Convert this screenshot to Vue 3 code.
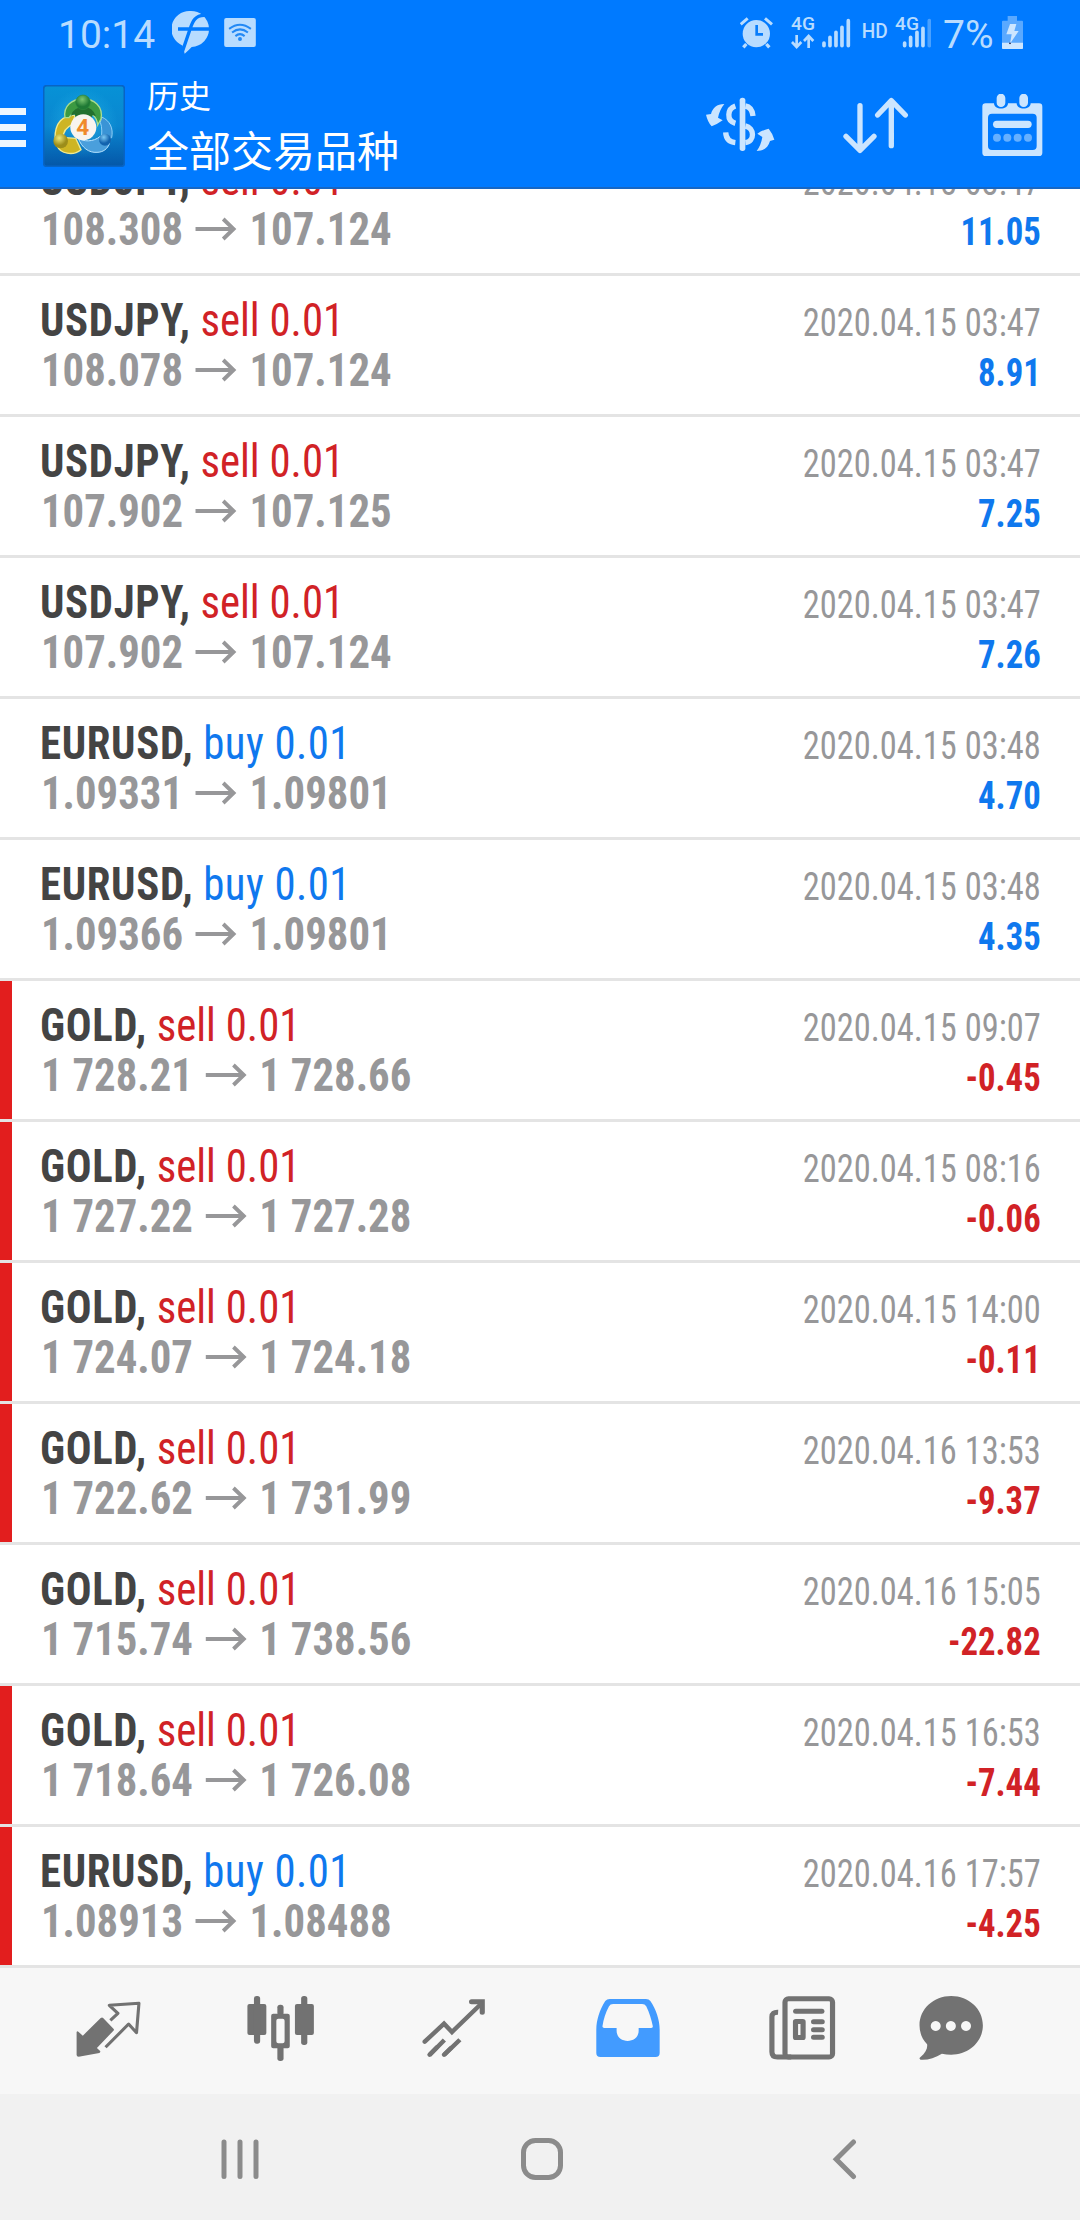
<script setup>
const rows = [
  ['USDJPY', 'sell', '108.308', '107.124', '2020.04.15 03:47', '11.05', false],
  ['USDJPY', 'sell', '108.078', '107.124', '2020.04.15 03:47', '8.91', false],
  ['USDJPY', 'sell', '107.902', '107.125', '2020.04.15 03:47', '7.25', false],
  ['USDJPY', 'sell', '107.902', '107.124', '2020.04.15 03:47', '7.26', false],
  ['EURUSD', 'buy', '1.09331', '1.09801', '2020.04.15 03:48', '4.70', false],
  ['EURUSD', 'buy', '1.09366', '1.09801', '2020.04.15 03:48', '4.35', false],
  ['GOLD', 'sell', '1 728.21', '1 728.66', '2020.04.15 09:07', '-0.45', true],
  ['GOLD', 'sell', '1 727.22', '1 727.28', '2020.04.15 08:16', '-0.06', true],
  ['GOLD', 'sell', '1 724.07', '1 724.18', '2020.04.15 14:00', '-0.11', true],
  ['GOLD', 'sell', '1 722.62', '1 731.99', '2020.04.16 13:53', '-9.37', true],
  ['GOLD', 'sell', '1 715.74', '1 738.56', '2020.04.16 15:05', '-22.82', false],
  ['GOLD', 'sell', '1 718.64', '1 726.08', '2020.04.15 16:53', '-7.44', true],
  ['EURUSD', 'buy', '1.08913', '1.08488', '2020.04.16 17:57', '-4.25', true],
].map(([symbol, side, open, close, time, profit, stopped]) => ({ symbol, side, open, close, time, profit, stopped }))
</script>

<template>
  <div class="screen">
    <header class="header">
      <div class="status">
        <span class="clock">10:14</span>
        <svg class="s-f" viewBox="515 30 111 132" width="37" height="44">
          <path fill="#b8dcff" d="M570 33a54 54 0 0 1 4 108q-9 10-21 20l-6-24A54 54 0 0 1 570 33z" />
          <path d="M620 47C584 42 576 66 569 88L545 158M533 87h93" fill="none" stroke="#007aff" stroke-width="10" />
        </svg>
        <svg class="s-wifi" viewBox="672 53 96 88" width="32" height="29">
          <rect x="672" y="53" width="96" height="88" rx="6" fill="#b8dcff" />
          <g fill="none" stroke="#2389f5" stroke-width="6">
            <path d="M687 86q33-25 66 0M696 97q24-19 48 0M706 108q14-12 28 0" />
          </g>
          <circle cx="720" cy="117" r="6" fill="#2389f5" />
        </svg>
        <span class="fill" />
        <svg class="s-icons" viewBox="149 45 574 105" width="191.3" height="35">
          <g fill="none" stroke="#b8dcff" stroke-width="9">
            <path d="M151 73l21-18M245 73l-21-18" />
            <path d="M168 132l-9 10M228 132l9 10" stroke-width="10" />
          </g>
          <circle cx="198" cy="101" r="41" fill="#b8dcff" />
          <path d="M199 75v28h19" fill="none" stroke="#0a7dfa" stroke-width="8" />
          <g class="net">
            <text x="302" y="90" font-size="54" textLength="72" lengthAdjust="spacingAndGlyphs">4G</text>
            <text x="514" y="115" font-size="58" textLength="78" lengthAdjust="spacingAndGlyphs">HD</text>
            <text x="614" y="90" font-size="54" textLength="72" lengthAdjust="spacingAndGlyphs">4G</text>
          </g>
          <path d="M319 105v36M305 126l14 15 14-15M355 144v-36M341 123l14-15 14 15" fill="none" stroke="#b8dcff" stroke-width="8" />
          <g fill="none" stroke="#b8dcff" stroke-width="11" stroke-linecap="round">
            <path d="M401 129v8M419 112v25M437 97v40M455 82v55M474 62v75" />
            <path d="M643 129v8M661 112v25M680 97v40M698 85v52" />
            <path d="M717 62v75" opacity=".4" />
          </g>
        </svg>
        <span class="pct">7%</span>
        <svg class="s-batt" viewBox="936 48 63 99" width="21" height="33">
          <path d="M953 48h28v14h15q3 0 3 3v79q0 3-3 3h-57q-3 0-3-3V65q0-3 3-3h14z" fill="#5aa9ff" />
          <path d="M936 128h63v16q0 3-3 3h-57q-3 0-3-3z" fill="#cde6ff" />
          <path d="M960 72h19l-6 21h13l-26 38 5-28h-16z" fill="#cde6ff" />
          <circle cx="960" cy="130" r="2.5" fill="#003" />
        </svg>
      </div>
      <div class="toolbar">
        <div class="menu"><i /><i /><i /></div>
        <svg class="logo" viewBox="130 254 246 246" width="82" height="82">
          <defs>
            <linearGradient id="bg" x1="0" y1="0" x2="0" y2="1">
              <stop offset="0" stop-color="#0792d6" /><stop offset=".5" stop-color="#0a86d0" /><stop offset="1" stop-color="#0457a8" />
            </linearGradient>
            <radialGradient id="glow"><stop offset="0" stop-color="#2fc4ef" /><stop offset="1" stop-color="#2fc4ef" stop-opacity="0" /></radialGradient>
            <radialGradient id="gr" cx=".45" cy=".3"><stop offset="0" stop-color="#7cc771" /><stop offset="1" stop-color="#1f7a35" /></radialGradient>
            <radialGradient id="ye" cx=".4" cy=".3"><stop offset="0" stop-color="#efe878" /><stop offset="1" stop-color="#9c8d1a" /></radialGradient>
            <radialGradient id="bl" cx=".4" cy=".3"><stop offset="0" stop-color="#7cc9f4" /><stop offset="1" stop-color="#1263ae" /></radialGradient>
          </defs>
          <rect x="132" y="256" width="242" height="242" rx="9" fill="url(#bg)" stroke="#0864c4" stroke-width="5" />
          <circle cx="250" cy="370" r="105" fill="url(#glow)" opacity=".55" />
          <path d="M306 350c24 10 36 34 30 62l-32 10c3-20 4-42-2-56z" fill="#3a94d6" stroke="#8fd0f8" stroke-width="3" />
          <path d="M236 414c16 10 44 12 66-6l28 20c-6 18-20 28-38 28-24 2-46-14-56-42z" fill="#4a9fdc" stroke="#b9e4ff" stroke-width="3" />
          <path d="M226 345c-36-2-61 22-60 70l24 0c0-22 8-34 28-42zM172 436c10 24 48 32 72 12l-16-34-30-2z" fill="#cdb524" stroke="#f2ea8e" stroke-width="4" />
          <path d="M196 352c-6-34 20-56 54-56s61 22 54 60l-10 18c-2-22-14-38-44-38s-36 6-42 16z" fill="#3c9a42" stroke="#a9dc90" stroke-width="4" />
          <path d="M213 346q10-26 38-26t38 28l-10-4-10 22h-36l-8-24z" fill="#23702f" />
          <circle cx="250" cy="306" r="22" fill="url(#gr)" stroke="#2e8a3e" stroke-width="2" />
          <circle cx="183" cy="422" r="22" fill="url(#ye)" />
          <circle cx="316" cy="418" r="18" fill="url(#bl)" />
          <circle cx="251" cy="381" r="39" fill="#f8f4ef" />
          <text x="249" y="404" text-anchor="middle" font-size="68" class="four">4</text>
        </svg>
        <div class="titles">
          <div class="t1">历史</div>
          <div class="t2">全部交易品种</div>
        </div>
        <svg class="a1" viewBox="48 282 206 186" width="68.7" height="62">
          <g fill="#cbe5ff">
            <rect x="149" y="293" width="17" height="160" rx="8" />
            <path d="M103 312C80 312 68 324 63 342L48 344q5 22 17 35 18-7 33-18l-14-8q5-24 19-41z" />
            <path d="M200 453c23 0 35-12 40-30l13-4q-6-20-17-33-18 4-34 15l15 10q-4 25-17 42z" />
          </g>
          <g fill="none" stroke="#cbe5ff" stroke-width="16">
            <path d="M136 318c-24 8-28 44 0 52M166 318c12 2 21 12 23 30M107 397c1 18 12 29 29 31M166 378c28 5 29 47 0 50" />
          </g>
        </svg>
        <svg class="a2" viewBox="460 282 196 186" width="65.3" height="62">
          <path d="M511 317v134M469 409l42 42 42-42M605 437V302M564 345l41-43 42 43" fill="none" stroke="#cbe5ff" stroke-width="16" stroke-linecap="round" stroke-linejoin="round" />
        </svg>
        <svg class="a3" viewBox="875 282 183 186" width="61" height="62">
          <path fill="#cbe5ff" fill-rule="evenodd" d="M886 310h25c0 21 42 21 42 0h26c0 21 42 21 42 0h25q10 0 10 10v138q0 10-10 10H886q-10 0-10-10V320q0-10 10-10zM905 341q-12 0-12 12v85q0 12 12 12h122q12 0 12-12v-85q0-12-12-12z" />
          <path d="M932 294v14M1000 294v14" stroke="#cbe5ff" stroke-width="26" stroke-linecap="round" />
          <path d="M919 373h94" stroke="#cbe5ff" stroke-width="22" stroke-linecap="round" />
          <g fill="#66b0ff"><circle cx="920" cy="413" r="12" /><circle cx="951" cy="413" r="12" /><circle cx="982" cy="413" r="12" /><circle cx="1013" cy="413" r="12" /></g>
        </svg>
      </div>
    </header>

    <main class="list">
      <div v-for="(r, i) in rows" :key="i" class="row" :class="{ stopped: r.stopped }">
        <div class="left">
          <div class="line"><b>{{ r.symbol }},</b> <span :class="[r.side, 'deal']">{{ r.side }} 0.01</span></div>
          <div class="line prices">
            <span>{{ r.open }}</span>
            <svg viewBox="0 0 44.8 24" width="44.8" height="24"><path d="M0 12h41M30 2l11 10-11 10" fill="none" stroke="#979799" stroke-width="4.2" /></svg>
            <span>{{ r.close }}</span>
          </div>
        </div>
        <div class="right">
          <div class="date">{{ r.time }}</div>
          <div class="profit" :class="r.profit[0] === '-' ? 'sell' : 'buy'">{{ r.profit }}</div>
        </div>
      </div>
    </main>

    <nav class="tabs">
      <div class="tab">
        <svg viewBox="196 93 232.3 240" preserveAspectRatio="none">
          <path d="M291 174q4-3 7 0l30 32q3 3 0 6l-48 52 10 10q0 4-3 5l-60 11q-6 0-6-5v-69q2-4 5-1l13 12z" fill="#727272" />
          <path d="M319 181l22-21-25-24 86-6-7 88-23-26-67 70" fill="none" stroke="#727272" stroke-width="9" stroke-linejoin="round" />
        </svg>
      </div>
      <div class="tab">
        <svg viewBox="698.4 93 232.3 240" preserveAspectRatio="none">
          <g fill="#727272">
            <rect x="717" y="132" width="55" height="93" rx="6" /><rect x="855" y="132" width="55" height="93" rx="6" />
            <rect x="736" y="108" width="18" height="143" rx="8" /><rect x="873" y="108" width="18" height="147" rx="8" />
            <rect x="804" y="134" width="18" height="32" rx="8" /><rect x="804" y="258" width="18" height="45" rx="8" />
            <path fill-rule="evenodd" d="M792 161h42q6 0 6 6v92q0 6-6 6h-42q-6 0-6-6v-92q0-6 6-6zM807 176q-6 0-6 6v62q0 6 6 6h12q6 0 6-6v-62q0-6-6-6z" />
          </g>
        </svg>
      </div>
      <div class="tab">
        <svg viewBox="1200.8 93 232.3 240" preserveAspectRatio="none">
          <g fill="none" stroke="#727272" stroke-linecap="round">
            <path d="M1232 245l56-54 23 25 82-82" stroke-width="13" />
            <path d="M1246 285l43-45M1288 285l46-46" stroke-width="13" stroke-linecap="butt" />
            <path d="M1246 284l20-21M1288 284l20-20" stroke-width="13" />
            <path d="M1368 125h31v32" stroke-width="15" /><path d="M1380 125h19v24z" fill="#727272" stroke="none" />
          </g>
        </svg>
      </div>
      <div class="tab">
        <svg viewBox="135 93 232.3 240" preserveAspectRatio="none">
          <path fill="#429bff" fill-rule="evenodd" d="M201 117h105q9 0 13 6c17 26 27 57 27 86v70q0 12-12 12H174q-12 0-12-12v-70c0-29 10-60 26-86q5-6 13-6zM211 132q-9 0-12 7c-10 19-16 39-19 59q-1 6 5 6h36v8c0 41 64 41 64 0v-8h35q7 0 6-6c-4-20-10-40-19-59q-4-7-12-7z" />
        </svg>
      </div>
      <div class="tab">
        <svg viewBox="637.4 93 232.3 240" preserveAspectRatio="none">
          <g fill="none" stroke="#727272" stroke-width="15">
            <rect x="710" y="116" width="138" height="175" rx="10" />
            <path d="M690 157q-18-1-18 14v104q0 16 16 16h40" />
            <path d="M741 154h76" stroke-linecap="round" />
            <path d="M793 185h25M793 209h25M793 232h25" stroke-linecap="round" />
            <rect x="740.5" y="184.5" width="22" height="48" rx="1" />
          </g>
        </svg>
      </div>
      <div class="tab last">
        <svg viewBox="1077.3 93 232.3 240" preserveAspectRatio="none">
          <path fill="#727272" fill-rule="evenodd" d="M1194 108c51 0 92 39 92 88s-41 88-92 88q-14 0-27-3c-20 12-42 20-62 18q-6-3 0-8c15-12 21-26 19-38-14-15-22-35-22-57 0-49 41-88 92-88zM1149 183a14.5 15 0 1 0 .1 0zM1193 183a14.5 15 0 1 0 .1 0zM1237 183a14.5 15 0 1 0 .1 0z" />
        </svg>
      </div>
    </nav>

    <footer class="sys">
      <svg viewBox="0 0 40 42" width="40" height="42"><path d="M4 4v34.500M20 4v34.500M36 4v34.500" stroke="#8b8b8b" stroke-width="5" stroke-linecap="round" /></svg>
      <svg viewBox="0 0 42 42" width="42" height="42"><rect x="2.5" y="2.5" width="37" height="37" rx="12" fill="none" stroke="#8b8b8b" stroke-width="5" /></svg>
      <svg viewBox="0 0 42 42" width="42" height="42"><path d="M29.500 4L12.200 21.200l17.300 17.300" fill="none" stroke="#8b8b8b" stroke-width="5" stroke-linecap="round" /></svg>
    </footer>
  </div>
</template>

<style>
body { margin: 0; background: #fff; }
</style>

<style scoped>
.screen { width: 1080px; height: 2220px; display: flex; flex-direction: column; overflow: hidden; background: #fff; font-family: "Roboto Condensed", Roboto, sans-serif; }
svg { display: block; flex: none; }
.header { box-sizing: border-box; height: 189px; flex: none; background: #007aff; border-bottom: 2px solid #1767c4; font-family: Roboto, sans-serif; }
.status { height: 64px; display: flex; align-items: center; color: #b8dcff; padding: 0 57px 0 58px; }
.clock { width: 96px; font-size: 39px; white-space: nowrap; margin-top: 5px; }
.s-f { margin-left: 17.5px; }
.s-wifi { margin-left: 15.5px; }
.fill { flex: 1; }
.net text { font-family: Roboto, sans-serif; font-weight: 500; fill: #b8dcff; }
.pct { width: 59px; margin: 5px 0 0 12px; font-size: 39px; white-space: nowrap; }
.s-batt { margin-top: 1px; }
.toolbar { height: 123px; display: flex; align-items: flex-start; }
.menu { width: 26px; display: flex; flex-direction: column; gap: 9px; margin-top: 44px; }
.menu i { height: 7px; background: #ecf6ff; }
.logo { margin: 21px 22px 0 17px; }
.four { font-family: Roboto, sans-serif; font-weight: 700; fill: #f08a2c; }
.titles { flex: 1; color: #fff; font-family: "Noto Sans CJK SC", sans-serif; }
.t1 { font-size: 32px; line-height: 48px; margin-top: 6px; }
.t2 { font-size: 42px; line-height: 60px; margin-top: 1px; }
.a1, .a2, .a3 { margin-top: 30px; }
.a2 { margin-left: 68.6px; }
.a3 { margin: 30px 37.3px 0 73px; }
.list { flex: none; height: 1779px; overflow: hidden; }
.row { box-sizing: border-box; height: 141px; display: flex; justify-content: space-between; border-bottom: 3px solid #e4e4e4; padding: 19px 39.5px 0 40px; }
.row:first-child { margin-top: -54px; }
.stopped { background: linear-gradient(#e21e1e, #e21e1e) 0 0 / 12px 100% no-repeat; background-clip: padding-box; }
.left, .right { font-stretch: 75%; }
.line { font-size: 46px; line-height: 50px; white-space: pre; color: #444; transform: scaleX(.931); transform-origin: left; }
.line b { letter-spacing: .7px; }
.deal.buy { letter-spacing: .45px; }
.prices { display: flex; align-items: center; color: #979799; font-weight: 700; padding-left: 1px; transform: scaleX(.93); }
.prices svg { margin: 0 13.3px; }
.right { padding-top: 3px; text-align: right; font-size: 38px; line-height: 50px; white-space: nowrap; }
.date, .profit { transform: scaleX(.906); transform-origin: right; }
.date { color: #979799; }
.profit { font-weight: 700; transform: scaleX(.914); }
.sell { color: #d12226; }
.buy { color: #0f78ee; }
.tabs { height: 126px; flex: none; display: flex; align-items: center; padding-left: 21px; background: #f7f7f7; }
.tab { width: 173px; display: flex; justify-content: center; }
.tab svg { width: 80px; height: 80px; }
.last { width: 130px; }
.sys { height: 126px; flex: none; display: flex; align-items: center; justify-content: space-between; padding: 4px 214px 0 220px; box-sizing: border-box; background: #f1f1f1; }
</style>
